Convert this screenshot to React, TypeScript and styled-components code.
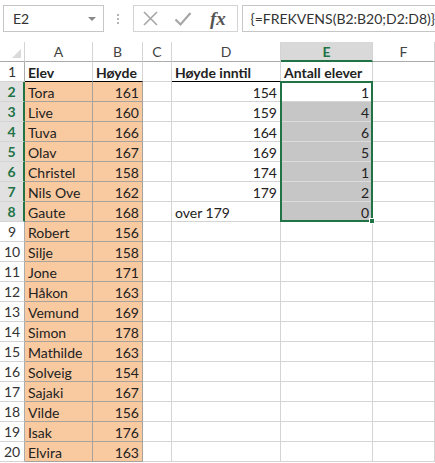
import styled, { createGlobalStyle } from "styled-components"

const Global = createGlobalStyle`
    html, body {
        margin: 0;
        padding: 0;
        background: #ffffff;
        font-family: "Lato", "Liberation Sans", sans-serif;
        overflow: hidden;
    }
    * { box-sizing: border-box; }
`;

const GREEN = "#217346";
const GRID = "#d4d4d4";
const ORANGE = "#f9c99f";
const ORANGE_LINE = "#a8a29c";

const Page = styled.div`
    width: 435px;
    height: 463px;
    overflow: hidden;
`;

const FormulaBar = styled.div`
    height: 42px;
    display: flex;
    align-items: flex-start;
    padding-top: 5px;
`;

const NameBox = styled.div`
    margin-left: 3px;
    width: 104px;
    height: 27px;
    border: 1px solid #c6c6c6;
    display: flex;
    align-items: center;
    padding: 0 7px 0 9px;
    font-size: 14px;
    color: #333;
    & span { flex: 1; }
`;

const Arrow = styled.div`
    width: 0;
    height: 0;
    border-left: 4px solid transparent;
    border-right: 4px solid transparent;
    border-top: 4px solid #8a8a8a;
`;

const Dots = styled.div`
    width: 30px;
    height: 27px;
    display: flex;
    flex-direction: column;
    align-items: center;
    justify-content: center;
    gap: 2px;
    & i {
        width: 2px;
        height: 2px;
        background: #b4b4b4;
    }
`;

const Buttons = styled.div`
    width: 109px;
    height: 27px;
    border: 1px solid #d4d4d4;
    display: flex;
    align-items: center;
    padding-left: 8px;
    gap: 15px;
`;

const Fx = styled.span`
    font-family: "Liberation Serif", serif;
    font-style: italic;
    font-weight: bold;
    font-size: 19px;
    color: #555;
    margin-left: 3px;
`;

const FormulaInput = styled.div`
    margin-left: 4px;
    flex: 1;
    height: 27px;
    border: 1px solid #c6c6c6;
    border-right: none;
    display: flex;
    align-items: center;
    padding-left: 7px;
    font-size: 14px;
    color: #333;
    white-space: nowrap;
`;

const Sheet = styled.div`
    display: grid;
    grid-template-columns: 25px 68px 50px 29px 109px 92px 1fr;
    grid-auto-rows: 20px;
    font-size: 14px;
    color: #222;
`;

const Corner = styled.div`
    border-right: 1px solid ${GRID};
    border-bottom: 1px solid #ababab;
    display: flex;
    align-items: flex-end;
    justify-content: flex-end;
    padding: 0 3px 3px 0;
`;

const ColHead = styled.div<{ $active?: boolean }>`
    display: flex;
    align-items: center;
    justify-content: center;
    font-size: 14px;
    color: ${p => p.$active ? GREEN : "#444"};
    font-weight: ${p => p.$active ? 700 : 400};
    background: ${p => p.$active ? "#d9d9d9" : "#fff"};
    border-right: 1px solid ${GRID};
    border-bottom: ${p => p.$active ? `2px solid ${GREEN}` : "1px solid #ababab"};
`;

const RowHead = styled.div<{ $active?: boolean }>`
    display: flex;
    align-items: center;
    justify-content: center;
    font-size: 14px;
    color: ${p => p.$active ? GREEN : "#333"};
    font-weight: ${p => p.$active ? 700 : 400};
    background: ${p => p.$active ? "#e1e1e1" : "#fff"};
    border-bottom: 1px solid ${GRID};
    border-right: ${p => p.$active ? `2px solid ${GREEN}` : "1px solid #ababab"};
`;

const Cell = styled.div<{ $fill?: string; $line?: string; $under?: string; $right?: boolean; $bold?: boolean }>`
    position: relative;
    display: flex;
    align-items: center;
    justify-content: ${p => p.$right ? "flex-end" : "flex-start"};
    padding: 1px 3px 0 3px;
    white-space: nowrap;
    font-weight: ${p => p.$bold ? 700 : 400};
    background: ${p => p.$fill || "#fff"};
    border-right: 1px solid ${p => p.$line || GRID};
    border-bottom: 1px solid ${p => p.$under || p.$line || GRID};
`;

// green outline of the selected range E2:E8, laid over the cells
const Selection = styled.div<{ $rows: number }>`
    position: absolute;
    left: -1px;
    top: -1px;
    width: 93px;
    height: ${p => p.$rows * 20 + 1}px;
    border: 2px solid ${GREEN};
    pointer-events: none;
    z-index: 2;
`;

const FillHandle = styled.div`
    position: absolute;
    right: -4px;
    bottom: -4px;
    width: 6px;
    height: 6px;
    background: ${GREEN};
    border: 1px solid #fff;
`;

const students: [string, number][] = [
    ["Tora", 161], ["Live", 160], ["Tuva", 166], ["Olav", 167], ["Christel", 158],
    ["Nils Ove", 162], ["Gaute", 168], ["Robert", 156], ["Silje", 158], ["Jone", 171],
    ["Håkon", 163], ["Vemund", 169], ["Simon", 178], ["Mathilde", 163], ["Solveig", 154],
    ["Sajaki", 167], ["Vilde", 156], ["Isak", 176], ["Elvira", 163],
];

const limits: (number | string)[] = [154, 159, 164, 169, 174, 179, "over 179"];
const counts = [1, 4, 6, 5, 1, 2, 0];

const App = () => {
    return (
        <Page>
            <Global />
            <FormulaBar>
                <NameBox><span>E2</span><Arrow /></NameBox>
                <Dots><i /><i /><i /></Dots>
                <Buttons>
                    <svg width="17" height="17" viewBox="0 0 17 17">
                        <path d="M2 2 L15 15 M15 2 L2 15" stroke="#a6a6a6" strokeWidth="1.6" fill="none" />
                    </svg>
                    <svg width="18" height="16" viewBox="0 0 18 16">
                        <path d="M1.5 8.5 L6.5 13.5 L16.5 2" stroke="#a6a6a6" strokeWidth="2.2" fill="none" />
                    </svg>
                    <Fx>fx</Fx>
                </Buttons>
                <FormulaInput>{"{=FREKVENS(B2:B20;D2:D8)}"}</FormulaInput>
            </FormulaBar>
            <Sheet>
                <Corner>
                    <svg width="9" height="9" viewBox="0 0 9 9"><path d="M9 0 L9 9 L0 9 Z" fill="#dadada" /></svg>
                </Corner>
                {["A", "B", "C", "D", "E", "F"].map(c => <ColHead key={c} $active={c === "E"}>{c}</ColHead>)}

                <RowHead>1</RowHead>
                <Cell $bold $under="#000">Elev</Cell>
                <Cell $bold $under="#000">Høyde</Cell>
                <Cell />
                <Cell $bold $under="#000">Høyde inntil</Cell>
                <Cell $bold>Antall elever</Cell>
                <Cell />

                {students.map(([name, h], i) => {
                    const r = i + 2;
                    const lim = limits[i];
                    const hasStat = i < 7;
                    const grey = hasStat && r > 2;
                    return [
                        <RowHead key={`h${r}`} $active={r <= 8}>{r}</RowHead>,
                        <Cell key={`a${r}`} $fill={ORANGE} $line={ORANGE_LINE}>{name}</Cell>,
                        <Cell key={`b${r}`} $fill={ORANGE} $line={ORANGE_LINE} $right>{h}</Cell>,
                        <Cell key={`c${r}`} />,
                        <Cell key={`d${r}`} $right={typeof lim === "number"}>{lim ?? ""}</Cell>,
                        <Cell key={`e${r}`} $right $fill={grey ? "#c6c6c6" : undefined} $line={grey ? "#dcdcdc" : undefined}>
                            {hasStat ? counts[i] : ""}
                            {r === 2 && <Selection $rows={counts.length}><FillHandle /></Selection>}
                        </Cell>,
                        <Cell key={`f${r}`} />,
                    ];
                })}
            </Sheet>
        </Page>
    )
}

export default App;
